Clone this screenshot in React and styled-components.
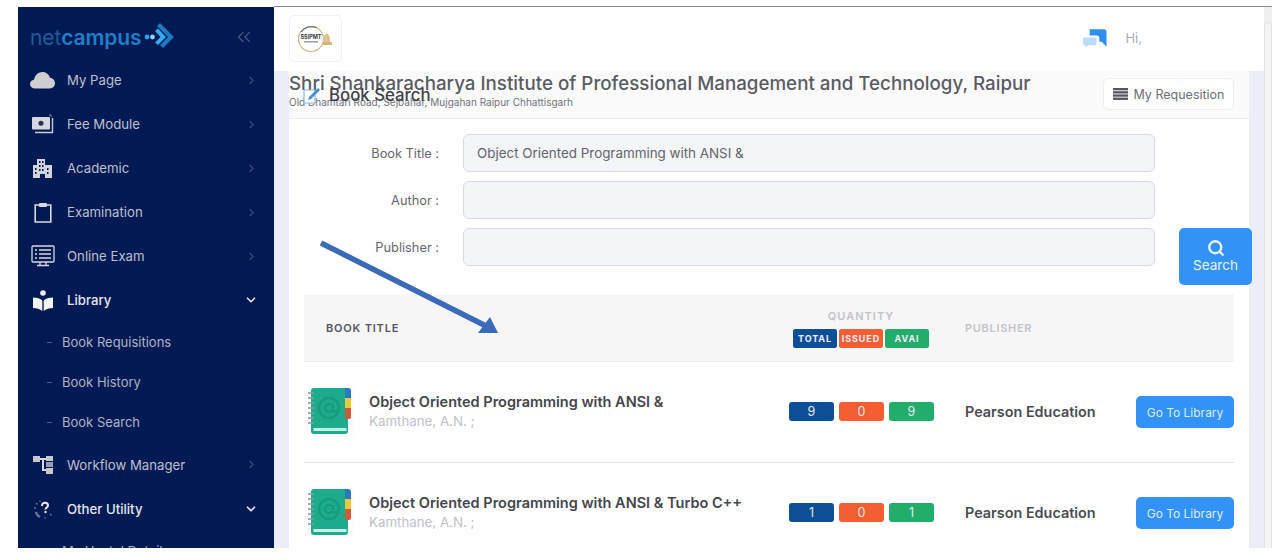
import React from "react";
import styled, { createGlobalStyle } from "styled-components";
import { ChevronRight, ChevronDown, ChevronsLeft, Search } from "lucide-react";

const Global = createGlobalStyle`
  html, body { margin: 0; padding: 0; background: #fff; height: 560px; overflow: hidden; }
  * { box-sizing: border-box; }
  body { font-family: Inter, "Noto Sans", sans-serif; }
`;
const Frame = styled.div`
  width: 1254px; height: 542px; margin: 6px 0 0 18px; display: flex; overflow: hidden;
`;
const Sidebar = styled.aside`
  width: 256px; flex: none; background: #011a54; margin-top: 1px; overflow: hidden; color: #c3c6d1;
`;
const Brand = styled.div`
  height: 51px; padding: 9px 19px 0 12px; display: flex; align-items: center; justify-content: space-between;
`;
const Logo = styled.div`
  display: flex; align-items: center; font-size: 21px; line-height: 1; letter-spacing: -0.1px; color: #1a5f97;
  b { font-weight: 600; color: #1f7fc4; }
`;
const Menu = styled.nav`display: flex; flex-direction: column;`;
const Item = styled.div`
  height: 44px; display: flex; align-items: center; padding: 0 16px 0 12px; font-size: 13.2px;
  color: ${p => p.$bright ? "#e4e6ec" : "#bcc0cc"};
  font-weight: ${p => p.$bright ? 500 : 400};
`;
const IconSlot = styled.span`width: 25px; height: 24px; display: flex; align-items: center; justify-content: center; margin-right: 12px; flex: none;`;
const ItemLabel = styled.span`flex: 1;`;
const SubItem = styled.div`
  height: 40.2px; display: flex; align-items: center; padding-left: 29px; gap: 10px; font-size: 13px; color: #aeb3c2;
  &::before { content: ""; width: 5px; height: 1px; background: #4d5f88; }
`;
const Main = styled.main`flex: 1; min-width: 0; display: flex; flex-direction: column; border-top: 1px solid #8b8b8b; position: relative;`;
const Header = styled.header`
  height: 64px; flex: none; background: #fff; margin-right: 8px; padding: 8px 0 0 15px; display: flex; align-items: flex-start; justify-content: space-between;
`;
const LogoBox = styled.div`
  width: 53px; height: 47px; border: 1px solid #f1f1f1; border-radius: 5px; display: flex; align-items: center; justify-content: center;
`;
const HeaderRight = styled.div`display: flex; align-items: center; gap: 18px; padding: 13px 122px 0 0; font-size: 13px; color: #a9adb6;`;
const Workspace = styled.div`flex: 1; min-height: 0; display: flex; background: #fff;`;
const Canvas = styled.div`flex: 1; background: #ebedf7; padding: 0 15px; min-height: 0; overflow: hidden;`;
const Scrollbar = styled.div`width: 8px; flex: none; background: #f0f0f1; margin-top: -64px; position: relative; &::after { content: ""; position: absolute; left: 0; top: 15px; right: 0; bottom: 0; border: 1px solid #e2e2e3; border-bottom: 0; border-radius: 4px 4px 0 0; background: #f4f4f5; }`;
const Card = styled.section`background: #fff; min-height: 100%; position: relative;`;
const CardHead = styled.div`
  height: 48px; border-bottom: 1px solid #ececee; background: #fbfbfc; display: flex; justify-content: space-between; align-items: flex-start; padding: 1px 15px 0 0; position: relative;
`;
const School = styled.div`color: #5a5c63;`;
const SchoolName = styled.div`font-size: 18.75px; font-weight: 500; line-height: 24px; white-space: nowrap;`;
const SchoolAddress = styled.div`font-size: 10px; line-height: 12px; color: #70727a;`;
const PageTitle = styled.div`
  position: absolute; left: 14px; top: 14px; display: flex; align-items: center; gap: 8px; font-size: 16.8px; font-weight: 500; color: #3f4147;
`;
const OutlineButton = styled.div`
  width: 131px; height: 32px; margin-top: 6px; border: 1px solid #eeeeef; border-radius: 5px; background: #fff; display: flex; align-items: center; justify-content: center; gap: 6px; font-size: 12.5px; color: #6d6f76;
`;
const Form = styled.div`display: grid; grid-template-columns: 1fr 46px; gap: 0 24px; padding: 15px 15px 0 0;`;
const Fields = styled.div`display: flex; flex-direction: column; gap: 9px;`;
const Field = styled.div`display: grid; grid-template-columns: 150px 692px; gap: 24px; align-items: center;`;
const FieldLabel = styled.label`text-align: right; font-size: 12.8px; color: #66686f;`;
const Input = styled.div`
  height: 38px; border: 1px solid #d9dbe0; border-radius: 6px; background: #f3f5f8; padding: 0 13px; font-size: 13.4px; display: flex; align-items: center; color: #63656c;
`;
const SearchButton = styled.div`
  width: 73px; height: 57px; margin: 94px 0 0 -9px; background: #3392f5; border-radius: 5px; color: #e8f3ff; display: flex; flex-direction: column; align-items: center; justify-content: center; font-size: 13.6px; line-height: 17px; position: relative; z-index: 1;
`;
const Table = styled.div`margin: 9px 15px 0;`;
const TableHead = styled.div`
  height: 68px; background: #f6f6f7; display: flex; align-items: center; border-bottom: 1px solid #ececee;
`;
const ColTitle = styled.div`flex: none; width: 484px; padding-left: 22px; font-size: 11px; font-weight: 600; letter-spacing: 0.8px; color: #55575e;`;
const ColQty = styled.div`width: 177px; flex: none; display: flex; flex-direction: column; align-items: flex-start; gap: 6px; margin-top: 1px;`;
const QtyHead = styled.div`width: 146px; text-align: center; font-size: 11px; font-weight: 600; letter-spacing: 1px; color: #c3c4c9;`;
const Pills = styled.div`display: flex; gap: 2px; margin-left: 5px;`;
const Pill = styled.span`
  width: 44px; height: 19px; border-radius: 2.5px; background: ${p => p.$c}; color: #eef; font-size: 9px; font-weight: 700; letter-spacing: 0.9px; display: flex; align-items: center; justify-content: center;
`;
const ColPublisher = styled.div`font-size: 11px; font-weight: 600; letter-spacing: 0.7px; color: #c3c4c9;`;
const Row = styled.div`
  height: 101px; display: flex; align-items: center; border-bottom: 1px solid ${p => p.$last ? "transparent" : "#e2e3e5"};
`;
const BookCell = styled.div`width: 484px; flex: none; display: flex; align-items: center; gap: 14px; padding-left: 3px; margin-top: -2px;`;
const BookThumb = styled.div`width: 48px; height: 52px; background: #fcfcfd; display: flex; align-items: center; justify-content: center; border-radius: 6px;`;
const BookTitle = styled.div`font-size: 14.5px; font-weight: 600; color: #44464d; line-height: 19px;`;
const BookAuthor = styled.div`font-size: 13.3px; color: #c0c1c6; line-height: 18px; margin-top: 1px;`;
const QtyCell = styled.div`width: 176px; flex: none; display: flex; gap: 5px; margin: -1px 0 0 1px;`;
const Qty = styled.span`
  width: 45px; height: 19px; border-radius: 3px; background: ${p => p.$c}; color: #e4e9ef; font-size: 12.5px; display: flex; align-items: center; justify-content: center;
`;
const PublisherCell = styled.div`flex: 1; font-size: 14.4px; font-weight: 600; color: #4a4c52; margin-top: -2px;`;
const GoButton = styled.div`
  width: 98px; height: 32px; background: #3392f5; border-radius: 5px; color: #dcecff; font-size: 12px; display: flex; align-items: center; justify-content: center;
`;
const Annotation = styled.svg`position: absolute; left: 29px; top: 169px; pointer-events: none;`;

const CloudIcon = () => <svg width="25" height="18" viewBox="0 0 25 18"><path fill="#cfcfd2" d="M5 17.500C2 17.500 0 15.600 0 13c0-2.400 1.800-4 4-4.300C5 4 8.500 1 12.500 1c3.600 0 6.500 2.500 7.500 5.800 2.800.3 5 2.700 5 5.500 0 3-2.300 5.200-5.200 5.200z"/></svg>;
const FeeIcon = () => <svg width="23" height="21" viewBox="0 0 23 21"><path fill="none" stroke="#c9ccd5" strokeWidth="1.400" d="M4 18.500h17.500V4"/><rect x="1" y="3" width="18" height="12.500" rx="1" fill="#d6d8df"/><circle cx="10" cy="9.200" r="2.500" fill="#2a2e4a"/><path d="M18 1h2v2" stroke="#8c91a5" fill="none"/></svg>;
const BuildingIcon = () => <svg width="19" height="19" viewBox="0 0 19 19"><path fill="#d2d4db" d="M4 0h8v6h7v13h-7v-4H7v4H0V6h4z"/><path fill="#011a54" d="M6 2h1.500v2H6zM9 2h1.500v2H9zM6 6h1.500v2H6zM9 6h1.500v2H9zM2 9h1.500v2H2zM6 10h1.500v2H6zM9 10h1.500v2H9zM14 9h1.500v2H14zM2 13h1.500v2H2zM14 13h1.500v2H14zM8 15h3v4H8z"/></svg>;
const ClipIcon = () => <svg width="18" height="21" viewBox="0 0 18 21" fill="none" stroke="#d8dae0" strokeWidth="1.600"><path d="M5 3H1.200v17h15.600V3H13"/><rect x="5" y="1" width="8" height="4" fill="#d8dae0" stroke="none" rx="1"/></svg>;
const MonitorIcon = () => <svg width="24" height="22" viewBox="0 0 24 22" fill="none" stroke="#d5d7de" strokeWidth="1.300"><rect x="1" y="1" width="22" height="16" rx="1"/><path d="M4 5h2M8 5h12M4 9h2M8 9h12M4 13h2M8 13h12M9 17v3M15 17v3M6 20.500h12"/></svg>;
const LibraryIcon = () => <svg width="20" height="21" viewBox="0 0 20 21" fill="#f2f3f5"><circle cx="10" cy="3" r="2.800"/><path d="M0 7.500c4 0 7.500 1.200 9.300 3V21C7 19 3.500 18 0 18zM20 7.500c-4 0-7.500 1.200-9.300 3V21c2.300-2 5.800-3 9.300-3z"/></svg>;
const FlowIcon = () => <svg width="20" height="18" viewBox="0 0 20 18"><rect x="0" y="0" width="7" height="6" fill="#c6c8d0"/><rect x="13" y="0" width="7" height="5" fill="#c6c8d0"/><rect x="13" y="6" width="7" height="5" fill="#9a9eb0"/><rect x="13" y="12" width="7" height="6" fill="#c6c8d0"/><path d="M7 2h6v2H7zM9 4h2v11H9zM9 13h4v2H9z" fill="#d6d8de"/></svg>;
const UtilityIcon = () => <svg width="20" height="20" viewBox="0 0 20 20" fill="none"><path d="M9 7c0-2 1-3.200 3-3.200s3 1.200 3 2.700c0 2-2.500 2-2.500 4" stroke="#e8e9ee" strokeWidth="2"/><circle cx="12.500" cy="13" r="1.200" fill="#e8e9ee"/><path d="M3 13c.5 2.500 2 4 4 5" stroke="#66708f" strokeWidth="2.400"/><path d="M1 9h2M3 4l1.500 1.500M7 1.500V3M17 15l1.500 1.500M12 18v1.500" stroke="#66708f" strokeWidth="1.300"/></svg>;
const NetArrows = () => <svg width="34" height="28" viewBox="0 0 34 28" style={{marginLeft: 2}}><circle cx="3" cy="14" r="2.400" fill="#2f9fe4"/><circle cx="8.500" cy="14" r="2.400" fill="#8ad4f7"/><path d="M13 3l3-3 14 14-11 11-3-3 8-8z" fill="#1c78bf"/><path d="M11 8l3-2.500 8 8.500-8 8-3-2.500 5.500-5.500z" fill="#35aaec"/></svg>;
const SchoolLogo = () => <svg width="38" height="34" viewBox="0 0 38 34"><circle cx="14" cy="17" r="12.500" fill="none" stroke="#cdb783" strokeWidth="1.200"/><path d="M4 10a12.500 12.500 0 0 1 16-4" fill="none" stroke="#6a6a6a" strokeWidth="1.200"/><text x="14" y="17" textAnchor="middle" fontSize="5.500" fontWeight="700" fill="#3b3c4a" fontFamily="Inter, sans-serif">SSIPMT</text><rect x="7" y="19" width="14" height="1.500" fill="#9a9ba3"/><path d="M30 11l3 4v5h-7v-5z" fill="#dcc390"/><rect x="26" y="20" width="9" height="3" rx="1" fill="#d2b376"/></svg>;
const ChatIcon = () => <svg width="24" height="20" viewBox="0 0 25 20"><path fill="#2f8ff0" d="M7 1h15c1.500 0 2.500 1 2.500 2.500V19l-5-5H17V10c0-1.500-1-2.500-2.500-2.500H7z"/><rect x="0" y="9.500" width="14" height="8" rx="1.500" fill="#bcdcf8"/><path d="M2 17.500h4l-3 2.500z" fill="#bcdcf8"/></svg>;
const PenIcon = () => <svg width="18" height="18" viewBox="0 0 18 18"><path d="M1 4h11v13H1z" fill="#fff" stroke="#8fb8dc" strokeWidth="1.200"/><path d="M6 11l9-9 2 2-9 9-3 1z" fill="#3f8fd2"/></svg>;
const BarsIcon = () => <svg width="15" height="12" viewBox="0 0 15 12" fill="#55575e"><rect width="15" height="2.300" y="0"/><rect width="15" height="2.300" y="3.200"/><rect width="15" height="2.300" y="6.400"/><rect width="15" height="2.300" y="9.600"/></svg>;
const BookIcon = () => (
  <svg width="46" height="50" viewBox="0 0 46 50">
    <rect x="3" y="2" width="37" height="46" rx="3" fill="#1cab8c" />
    <path d="M37 2h3a3 3 0 0 1 3 3v7h-6z" fill="#2a78c0" />
    <rect x="37" y="12" width="6" height="10" fill="#e9c93a" />
    <path d="M37 22h6v9a2 2 0 0 1-2 2h-4z" fill="#cd5a3d" />
    <rect x="5.500" y="42" width="33" height="3" fill="#c7efe4" />
    <g stroke="#8d9aa0" strokeWidth="1.600">
      {[7, 12, 17, 22, 27, 32, 37].map(y => <path key={y} d={`M0 ${y}h6`} />)}
    </g>
    <circle cx="21" cy="22" r="10" fill="none" stroke="#179a7e" strokeWidth="2.200" />
    <circle cx="21" cy="22" r="4" fill="none" stroke="#179a7e" strokeWidth="2" />
    <path d="M25 18v6c0 2 4 2 6 0" fill="none" stroke="#179a7e" strokeWidth="2" />
  </svg>
);

const menuTop = [
  ["My Page", <CloudIcon />], ["Fee Module", <FeeIcon />], ["Academic", <BuildingIcon />],
  ["Examination", <ClipIcon />], ["Online Exam", <MonitorIcon />],
];
const Arrow = () => <ChevronRight size={13} color="#3d4d78" />;
const Down = () => <ChevronDown size={14} color="#dfe1e7" strokeWidth={3} />;

const books = [
  { title: "Object Oriented Programming with ANSI &", q: [9, 0, 9] },
  { title: "Object Oriented Programming with ANSI & Turbo C++", q: [1, 0, 1], last: true },
];
const colors = ["#0d4f96", "#f55d33", "#22ad6b"];

export default function App() {
  return (
    <>
      <Global />
      <Frame>
        <Sidebar>
          <Brand>
            <Logo>net<b>campus</b><NetArrows /></Logo>
            <ChevronsLeft size={22} color="#4b5b84" strokeWidth={1.300} />
          </Brand>
          <Menu>
            {menuTop.map(([label, icon]) => (
              <Item key={label}><IconSlot>{icon}</IconSlot><ItemLabel>{label}</ItemLabel><Arrow /></Item>
            ))}
            <Item $bright><IconSlot><LibraryIcon /></IconSlot><ItemLabel>Library</ItemLabel><Down /></Item>
            <SubItem>Book Requisitions</SubItem>
            <SubItem>Book History</SubItem>
            <SubItem>Book Search</SubItem>
            <Item><IconSlot><FlowIcon /></IconSlot><ItemLabel>Workflow Manager</ItemLabel><Arrow /></Item>
            <Item $bright><IconSlot><UtilityIcon /></IconSlot><ItemLabel>Other Utility</ItemLabel><Down /></Item>
            <SubItem>My Hostel Detail</SubItem>
          </Menu>
        </Sidebar>
        <Main>
          <Header>
            <LogoBox><SchoolLogo /></LogoBox>
            <HeaderRight><ChatIcon /><span>Hi,</span></HeaderRight>
          </Header>
          <Workspace>
            <Canvas>
              <Card>
                <CardHead>
                  <School>
                    <SchoolName>Shri Shankaracharya Institute of Professional Management and Technology, Raipur</SchoolName>
                    <SchoolAddress>Old Dhamtari Road, Sejbahar, Mujgahan Raipur Chhattisgarh</SchoolAddress>
                  </School>
                  <PageTitle><PenIcon />Book Search</PageTitle>
                  <OutlineButton><BarsIcon />My Requesition</OutlineButton>
                </CardHead>
                <Form>
                  <Fields>
                    <Field><FieldLabel>Book Title :</FieldLabel><Input>Object Oriented Programming with ANSI &amp;</Input></Field>
                    <Field><FieldLabel>Author :</FieldLabel><Input /></Field>
                    <Field><FieldLabel>Publisher :</FieldLabel><Input /></Field>
                  </Fields>
                  <SearchButton><Search size={18} strokeWidth={3.200} />Search</SearchButton>
                </Form>
                <Table>
                  <TableHead>
                    <ColTitle>BOOK TITLE</ColTitle>
                    <ColQty>
                      <QtyHead>QUANTITY</QtyHead>
                      <Pills>
                        <Pill $c={colors[0]}>TOTAL</Pill><Pill $c={colors[1]}>ISSUED</Pill><Pill $c={colors[2]}>AVAI</Pill>
                      </Pills>
                    </ColQty>
                    <ColPublisher>PUBLISHER</ColPublisher>
                  </TableHead>
                  {books.map(b => (
                    <Row key={b.title} $last={b.last}>
                      <BookCell>
                        <BookThumb><BookIcon /></BookThumb>
                        <div><BookTitle>{b.title}</BookTitle><BookAuthor>Kamthane, A.N. ;</BookAuthor></div>
                      </BookCell>
                      <QtyCell>{b.q.map((n, i) => <Qty key={i} $c={colors[i]}>{n}</Qty>)}</QtyCell>
                      <PublisherCell>Pearson Education</PublisherCell>
                      <GoButton>Go To Library</GoButton>
                    </Row>
                  ))}
                </Table>
                <Annotation width="184" height="96" viewBox="0 0 184 96">
                  <path d="M3 3L168 86" stroke="#3b6abb" strokeWidth="5.500" />
                  <path d="M180 93H160L172 77z" fill="#3b6abb" />
                </Annotation>
              </Card>
            </Canvas>
            <Scrollbar />
          </Workspace>
        </Main>
      </Frame>
    </>
  );
}
